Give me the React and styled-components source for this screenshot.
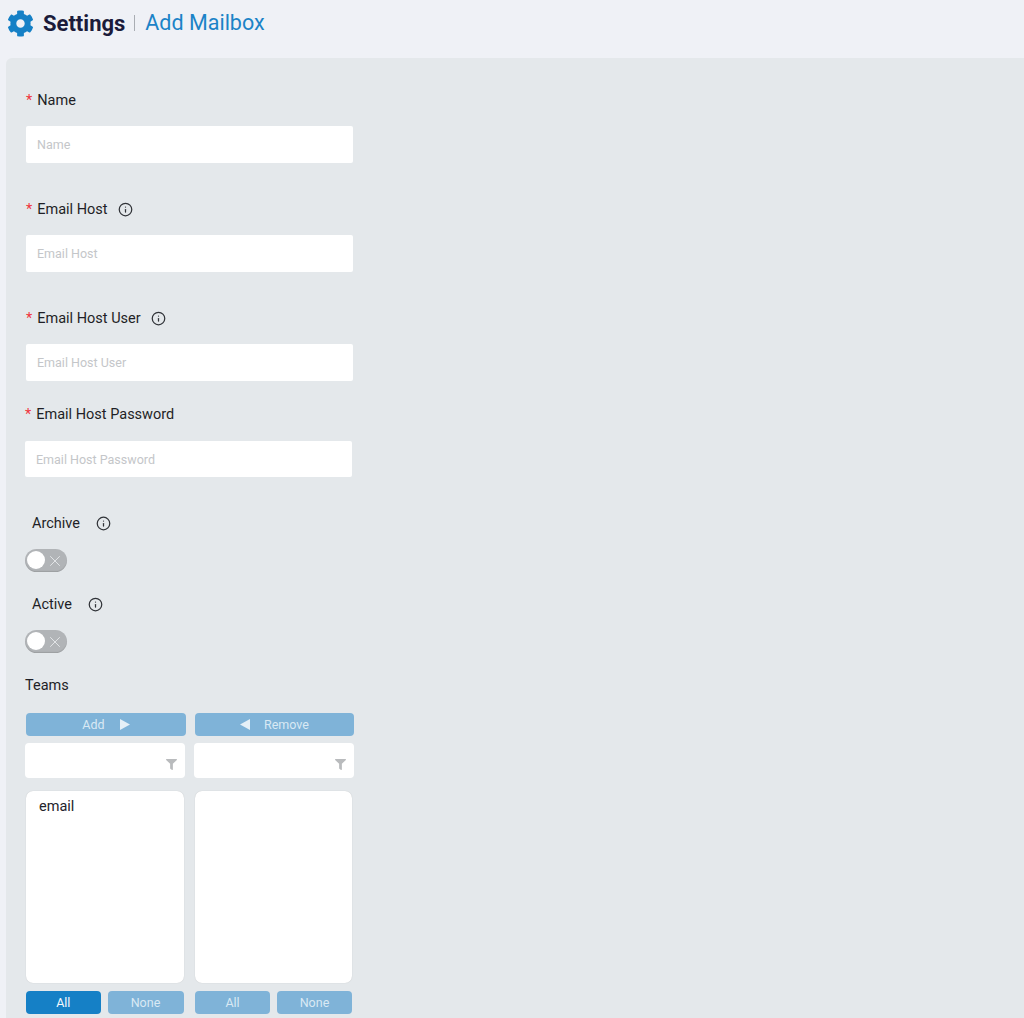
import React from 'react';
import styled, { createGlobalStyle } from 'styled-components';
import { FaCog, FaFilter } from 'react-icons/fa';
import { Info, X } from 'lucide-react';

const GlobalStyle = createGlobalStyle`
  html, body { margin: 0; padding: 0; height: 100%; overflow: hidden; }
  body { background: #eff1f6; font-family: Roboto, "Liberation Sans", sans-serif; color: #23232b; }
  * { box-sizing: border-box; }
`;

const Page = styled.div`
  width: 1024px;
  height: 1018px;
  display: flex;
  flex-direction: column;
  overflow: hidden;
`;

const Header = styled.header`
  height: 58px;
  flex: none;
  display: flex;
  align-items: center;
  padding: 0 0 12px 7px;
`;

const Gear = styled(FaCog)`
  width: 27px;
  height: 27px;
  color: #1580c6;
  margin-right: 9px;
`;

const Title = styled.h1`
  margin: 0;
  font-size: 22px;
  font-weight: 700;
  color: #1b1b3a;
`;

const Crumb = styled.span`
  font-size: 21.5px;
  color: #1b83c7;
  margin-left: 9px;
  padding-left: 10px;
  line-height: 16px;
  border-left: 1px solid #a9adb3;
`;

const Panel = styled.main`
  flex: 1;
  margin-left: 6px;
  background: #e4e8eb;
  border-top-left-radius: 6px;
  padding: 32px 0 0 19px;
`;

const Field = styled.div`
  width: 329px;
  padding-left: ${(p) => p.$indent ?? 1}px;
  margin-bottom: ${(p) => p.$gap || 0}px;
`;

const Label = styled.label`
  display: flex;
  align-items: center;
  height: 20px;
  padding-left: ${(p) => p.$pad || 0}px;
  margin-bottom: ${(p) => p.$gap || 16}px;
  font-size: 14.5px;
  font-weight: 400;
  color: #1f1f26;
`;

const Star = styled.span`
  color: #f0343c;
  margin-right: 5px;
`;

const InfoIcon = styled(Info)`
  width: 15px;
  height: 15px;
  margin-left: ${(p) => p.$left || 10}px;
  color: #303338;
`;

const Input = styled.input`
  display: block;
  width: 327px;
  height: ${(p) => p.$height || 37}px;
  padding: 0 11px;
  border: none;
  border-radius: 2px;
  background: #fff;
  font-family: inherit;
  font-size: 12.5px;
  outline: none;
  &::placeholder { color: #c4c6c9; opacity: 1; }
`;

const Toggle = styled.div`
  position: relative;
  width: 42px;
  height: 23px;
  border-radius: 12px;
  background: #b1b4b7;
  box-shadow: inset 0 -1px 1px rgba(0, 0, 0, 0.12);
  display: flex;
  align-items: center;
  justify-content: flex-end;
  padding-right: 3px;
  color: #f2f4f5;
  &::before {
    content: '';
    position: absolute;
    left: 2px;
    top: 2px;
    width: 18px;
    height: 18px;
    border-radius: 50%;
    background: #fff;
  }
`;

const Columns = styled.div`
  display: grid;
  grid-template-columns: 160px 159px;
  column-gap: 9px;
  width: 330px;
  margin-left: 1px;
`;

const Action = styled.button`
  height: 23px;
  border: none;
  border-radius: 4px;
  background: ${(p) => (p.$active ? '#1580c6' : '#7fb3d8')};
  color: ${(p) => (p.$active ? '#f4f9fc' : '#d9e9f4')};
  font-family: inherit;
  font-size: 12.5px;
  display: flex;
  align-items: center;
  justify-content: center;
  gap: ${(p) => p.$gap || 0}px;
  padding: 0;
`;

const Arrow = styled.svg`
  width: 10px;
  height: 11px;
  fill: #e6f0f7;
`;

const FilterBox = styled.div`
  height: 35px;
  width: 160px;
  margin: 7px 0 13px -1px;
  background: #fff;
  border-radius: 4px;
  display: flex;
  align-items: flex-end;
  justify-content: flex-end;
  padding: 0 7px 8px 0;
`;

const FilterIcon = styled(FaFilter)`
  width: 13px;
  height: 11px;
  color: #b9bbbd;
`;

const ListBox = styled.div`
  width: ${(p) => p.$width}px;
  height: 192px;
  background: #fff;
  border-radius: 7px;
  box-shadow: 0 0 1px rgba(0, 0, 0, 0.2);
  padding: 7px 13px;
  font-size: 14.5px;
  color: #23232b;
`;

const ButtonPair = styled.div`
  display: grid;
  grid-template-columns: ${(p) => p.$cols};
  column-gap: 7px;
  margin-top: 8px;
`;

const lists = [
  { items: ['email'], allActive: true, width: 158, cols: '74.5px 76px' },
  { items: [], allActive: false, width: 157, cols: '75px 75px' },
];

function TextField({ label, info, indent, height, gap, labelGap }) {
  return (
    <Field $indent={indent} $gap={gap}>
      <Label $gap={labelGap}>
        <Star>*</Star>
        {label}
        {info && <InfoIcon />}
      </Label>
      <Input placeholder={label} $height={height} />
    </Field>
  );
}

function SwitchField({ label, left, gap }) {
  return (
    <Field $indent={0} $gap={gap}>
      <Label $pad={7} $gap={16}>
        {label}
        <InfoIcon $left={left} />
      </Label>
      <Toggle><X size={18} strokeWidth={1} /></Toggle>
    </Field>
  );
}

export default function App() {
  return (
    <Page>
      <GlobalStyle />
      <Header>
        <Gear />
        <Title>Settings</Title>
        <Crumb>Add Mailbox</Crumb>
      </Header>
      <Panel>
        <TextField label="Name" gap={36} />
        <TextField label="Email Host" info gap={36} />
        <TextField label="Email Host User" info gap={23} />
        <TextField label="Email Host Password" indent={0} height={36} labelGap={17} gap={36} />
        <SwitchField label="Archive" left={16} gap={22} />
        <SwitchField label="Active" left={16} gap={22} />
        <Field $indent={0}>
          <Label $gap={18}>Teams</Label>
        </Field>
        <Columns>
          <Action $gap={15}>
            Add
            <Arrow viewBox="0 0 10 11"><polygon points="0,0 10,5.5 0,11" /></Arrow>
          </Action>
          <Action $gap={14}>
            <Arrow viewBox="0 0 10 11"><polygon points="10,0 0,5.5 10,11" /></Arrow>
            Remove
          </Action>
          <FilterBox><FilterIcon /></FilterBox>
          <FilterBox><FilterIcon /></FilterBox>
          {lists.map((list, i) => (
            <div key={i}>
              <ListBox $width={list.width}>{list.items.map((item) => <div key={item}>{item}</div>)}</ListBox>
              <ButtonPair $cols={list.cols}>
                <Action $active={list.allActive}>All</Action>
                <Action>None</Action>
              </ButtonPair>
            </div>
          ))}
        </Columns>
      </Panel>
    </Page>
  );
}
